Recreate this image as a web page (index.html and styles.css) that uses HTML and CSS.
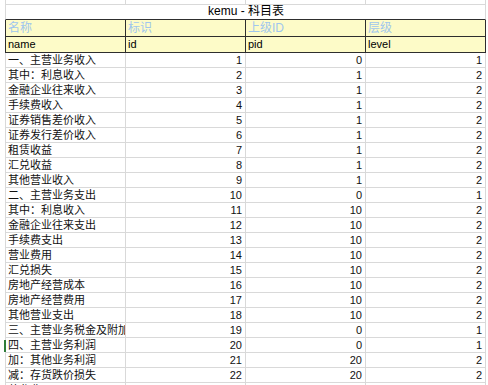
FILE: index.html
```html
<!DOCTYPE html>
<html lang="zh">
<head>
<meta charset="utf-8">
<title>kemu - 科目表</title>
<link rel="stylesheet" href="styles.css">
</head>
<body>
<div class="sheet">
  <div class="row stub"><div class="c first"></div><div class="c"></div><div class="c"></div><div class="c"></div></div>
  <div class="row title"><div class="c first span">kemu - 科目表</div></div>
  <div class="row head h1"><div class="c first">名称</div><div class="c">标识</div><div class="c">上级ID</div><div class="c">层级</div></div>
  <div class="row head h2"><div class="c first">name</div><div class="c">id</div><div class="c">pid</div><div class="c">level</div></div>
  <div class="row"><div class="c first">一、主营业务收入</div><div class="c n">1</div><div class="c n">0</div><div class="c n">1</div></div>
  <div class="row"><div class="c first">其中：利息收入</div><div class="c n">2</div><div class="c n">1</div><div class="c n">2</div></div>
  <div class="row"><div class="c first">金融企业往来收入</div><div class="c n">3</div><div class="c n">1</div><div class="c n">2</div></div>
  <div class="row"><div class="c first">手续费收入</div><div class="c n">4</div><div class="c n">1</div><div class="c n">2</div></div>
  <div class="row"><div class="c first">证券销售差价收入</div><div class="c n">5</div><div class="c n">1</div><div class="c n">2</div></div>
  <div class="row"><div class="c first">证券发行差价收入</div><div class="c n">6</div><div class="c n">1</div><div class="c n">2</div></div>
  <div class="row"><div class="c first">租赁收益</div><div class="c n">7</div><div class="c n">1</div><div class="c n">2</div></div>
  <div class="row"><div class="c first">汇兑收益</div><div class="c n">8</div><div class="c n">1</div><div class="c n">2</div></div>
  <div class="row"><div class="c first">其他营业收入</div><div class="c n">9</div><div class="c n">1</div><div class="c n">2</div></div>
  <div class="row"><div class="c first">二、主营业务支出</div><div class="c n">10</div><div class="c n">0</div><div class="c n">1</div></div>
  <div class="row"><div class="c first">其中：利息收入</div><div class="c n">11</div><div class="c n">10</div><div class="c n">2</div></div>
  <div class="row"><div class="c first">金融企业往来支出</div><div class="c n">12</div><div class="c n">10</div><div class="c n">2</div></div>
  <div class="row"><div class="c first">手续费支出</div><div class="c n">13</div><div class="c n">10</div><div class="c n">2</div></div>
  <div class="row"><div class="c first">营业费用</div><div class="c n">14</div><div class="c n">10</div><div class="c n">2</div></div>
  <div class="row"><div class="c first">汇兑损失</div><div class="c n">15</div><div class="c n">10</div><div class="c n">2</div></div>
  <div class="row"><div class="c first">房地产经营成本</div><div class="c n">16</div><div class="c n">10</div><div class="c n">2</div></div>
  <div class="row"><div class="c first">房地产经营费用</div><div class="c n">17</div><div class="c n">10</div><div class="c n">2</div></div>
  <div class="row"><div class="c first">其他营业支出</div><div class="c n">18</div><div class="c n">10</div><div class="c n">2</div></div>
  <div class="row"><div class="c first">三、主营业务税金及附加</div><div class="c n">19</div><div class="c n">0</div><div class="c n">1</div></div>
  <div class="row sel"><div class="c first">四、主营业务利润</div><div class="c n">20</div><div class="c n">0</div><div class="c n">1</div></div>
  <div class="row"><div class="c first">加：其他业务利润</div><div class="c n">21</div><div class="c n">20</div><div class="c n">2</div></div>
  <div class="row"><div class="c first">减：存货跌价损失</div><div class="c n">22</div><div class="c n">20</div><div class="c n">2</div></div>
  <div class="row"><div class="c first">营业费用</div><div class="c n">23</div><div class="c n">20</div><div class="c n">2</div></div>
</div>
</body>
</html>
```

FILE: styles.css
```css
* { box-sizing: border-box; }

html, body {
  margin: 0;
  padding: 0;
  background: #ffffff;
  overflow: hidden;
}

body {
  width: 488px;
  height: 385px;
  font-family: "Liberation Sans", "Noto Sans CJK SC", sans-serif;
  font-size: 11px;
  color: #111111;
}

.sheet {
  margin-left: 5px;
  width: 481px;
}

.row {
  display: grid;
  grid-template-columns: 121px 120px 120px 120px;
  height: 15px;
  position: relative;
}

.c {
  height: 100%;
  border-right: 1px solid #d9d9d9;
  border-bottom: 1px solid #d9d9d9;
  padding: 0 3px 0 2px;
  white-space: nowrap;
  overflow: hidden;
  display: flex;
  align-items: center;
  line-height: 13px;
}

.c.first {
  border-left: 1px solid #d9d9d9;
}

.c.n {
  justify-content: flex-end;
}

.stub {
  height: 5px;
}

.title {
  height: 15px;
}

.title .c {
  grid-column: 1 / 5;
  justify-content: center;
  font-size: 12px;
  color: #000000;
  border-bottom-color: #2e2e2e;
  padding: 0 0 1px 1px;
}

.head .c {
  background: #fdfbc8;
  border-right-color: #2e2e2e;
  border-bottom-color: #2e2e2e;
  color: #000000;
}

.head .c.first {
  border-left-color: #2e2e2e;
}

.h1 {
  height: 17px;
}

.h1 .c {
  font-size: 12px;
  color: #9fc6ee;
}

.h2 {
  height: 16px;
}

.sel::before {
  content: "";
  position: absolute;
  left: -1px;
  top: 2px;
  width: 2px;
  height: 12px;
  background: #2f7d3a;
}
```
